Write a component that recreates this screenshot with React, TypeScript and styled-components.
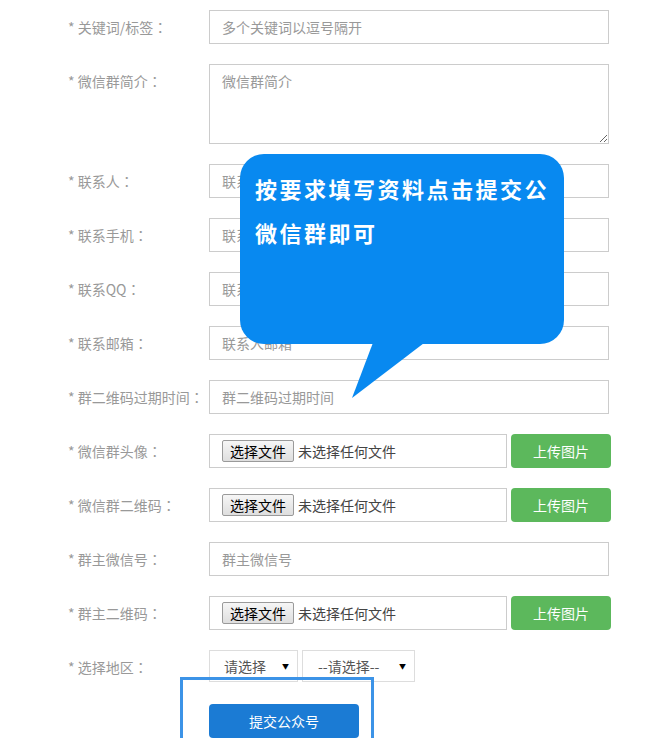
import React from "react";
import styled, { createGlobalStyle } from "styled-components";

const GlobalStyle = createGlobalStyle`
  html, body { margin: 0; padding: 0; background: #fff; }
  body {
    font-family: "Microsoft YaHei", "Noto Sans CJK SC", "Noto Sans", sans-serif;
    font-size: 14px;
    color: #333;
  }
  * { box-sizing: border-box; }
`;

const Page = styled.div`
  position: relative;
  width: 666px;
  height: 738px;
  overflow: hidden;
`;

const Form = styled.form`
  display: flex;
  flex-direction: column;
  gap: 20px;
  padding: 10px 0 0 68px;
`;

const Row = styled.div`
  display: flex;
  align-items: flex-start;
`;

const Label = styled.label`
  flex: 0 0 141px;
  line-height: 34px;
  color: #999;
  font-size: 14px;
  white-space: nowrap;
`;

const Colon = styled.span`
  font-family: "Noto Sans CJK JP", "Noto Sans CJK SC", sans-serif;
`;

const TextInput = styled.input`
  width: 400px;
  height: 34px;
  border: 1px solid #ccc;
  padding: 0 12px;
  font-family: inherit;
  font-size: 14px;
  color: #333;
  outline: none;
  &::placeholder { color: #999; }
`;

const TextArea = styled.textarea`
  width: 400px;
  height: 80px;
  border: 1px solid #ccc;
  padding: 6px 12px;
  font-family: inherit;
  font-size: 14px;
  line-height: 20px;
  outline: none;
  &::placeholder { color: #999; }
`;

const FileBox = styled.div`
  width: 298px;
  height: 34px;
  border: 1px solid #ccc;
  display: flex;
  align-items: center;
  padding-left: 12px;
  gap: 4px;
`;

const FileButton = styled.span`
  display: inline-flex;
  align-items: center;
  justify-content: center;
  width: 72px;
  height: 22px;
  border: 1px solid #9a9a9a;
  border-radius: 2px;
  background: linear-gradient(#f6f6f6, #dedede);
  color: #000;
  font-size: 14px;
`;

const FileText = styled.span`
  color: #444;
  font-size: 14px;
`;

const GreenButton = styled.button`
  margin-left: 4px;
  width: 100px;
  height: 34px;
  border: none;
  border-radius: 4px;
  background: #5cb85c;
  color: #fff;
  font-family: inherit;
  font-size: 14px;
`;

const SelectGroup = styled.div`
  display: flex;
  gap: 4px;
`;

const SelectBox = styled.div<{ $w: number; $pl: number }>`
  width: ${(p) => p.$w}px;
  height: 32px;
  border: 1px solid #ddd;
  display: flex;
  align-items: center;
  justify-content: space-between;
  padding: 0 8px 0 ${(p) => p.$pl}px;
  color: #555;
  font-size: 14px;
`;

const Arrow = styled.span`
  font-size: 7px;
  color: #000;
`;

const SubmitRow = styled.div`
  padding-left: 141px;
`;

const SubmitButton = styled.button`
  width: 150px;
  height: 34px;
  border: none;
  border-radius: 4px;
  background: #1b7bd4;
  color: #fff;
  font-family: inherit;
  font-size: 14px;
`;

const Highlight = styled.div`
  position: absolute;
  left: 180px;
  top: 677px;
  width: 194px;
  height: 80px;
  border: 3px solid #3c93e7;
  pointer-events: none;
`;

const Bubble = styled.div`
  position: absolute;
  left: 240px;
  top: 154px;
  width: 324px;
  height: 190px;
  background: #0889f0;
  border-radius: 24px;
  padding: 12px 10px 0 15px;
  color: #fff;
  font-size: 22px;
  font-weight: 700;
  line-height: 44px;
  letter-spacing: 2.5px;
`;

const Tail = styled.svg`
  position: absolute;
  left: 110px;
  top: 186px;
`;

const fields: { label: string; ph: string }[] = [
  { label: "* 联系人", ph: "联系人" },
  { label: "* 联系手机", ph: "联系手机" },
  { label: "* 联系QQ", ph: "联系QQ" },
  { label: "* 联系邮箱", ph: "联系人邮箱" },
  { label: "* 群二维码过期时间", ph: "群二维码过期时间" },
];

const FieldLabel = ({ text }: { text: string }) => (
  <Label>
    {text}
    <Colon>：</Colon>
  </Label>
);

const FileRow = ({ label }: { label: string }) => (
  <Row>
    <FieldLabel text={label} />
    <FileBox>
      <FileButton>选择文件</FileButton>
      <FileText>未选择任何文件</FileText>
    </FileBox>
    <GreenButton type="button">上传图片</GreenButton>
  </Row>
);

export default function App() {
  return (
    <Page>
      <GlobalStyle />
      <Form onSubmit={(e) => e.preventDefault()}>
        <Row>
          <FieldLabel text="* 关键词/标签" />
          <TextInput placeholder="多个关键词以逗号隔开" />
        </Row>
        <Row>
          <FieldLabel text="* 微信群简介" />
          <TextArea placeholder="微信群简介" />
        </Row>
        {fields.map((f) => (
          <Row key={f.label}>
            <FieldLabel text={f.label} />
            <TextInput placeholder={f.ph} />
          </Row>
        ))}
        <FileRow label="* 微信群头像" />
        <FileRow label="* 微信群二维码" />
        <Row>
          <FieldLabel text="* 群主微信号" />
          <TextInput placeholder="群主微信号" />
        </Row>
        <FileRow label="* 群主二维码" />
        <Row>
          <FieldLabel text="* 选择地区" />
          <SelectGroup>
            <SelectBox $w={89} $pl={14}>
              <span>请选择</span>
              <Arrow>▼</Arrow>
            </SelectBox>
            <SelectBox $w={113} $pl={15}>
              <span>--请选择--</span>
              <Arrow>▼</Arrow>
            </SelectBox>
          </SelectGroup>
        </Row>
        <SubmitRow>
          <SubmitButton type="submit">提交公众号</SubmitButton>
        </SubmitRow>
      </Form>
      <Highlight />
      <Bubble>
        按要求填写资料点击提交公
        <br />
        微信群即可
        <Tail width="80" height="60" viewBox="0 0 80 60">
          <polygon points="24,0 78,0 2,58" fill="#0889f0" />
        </Tail>
      </Bubble>
    </Page>
  );
}
